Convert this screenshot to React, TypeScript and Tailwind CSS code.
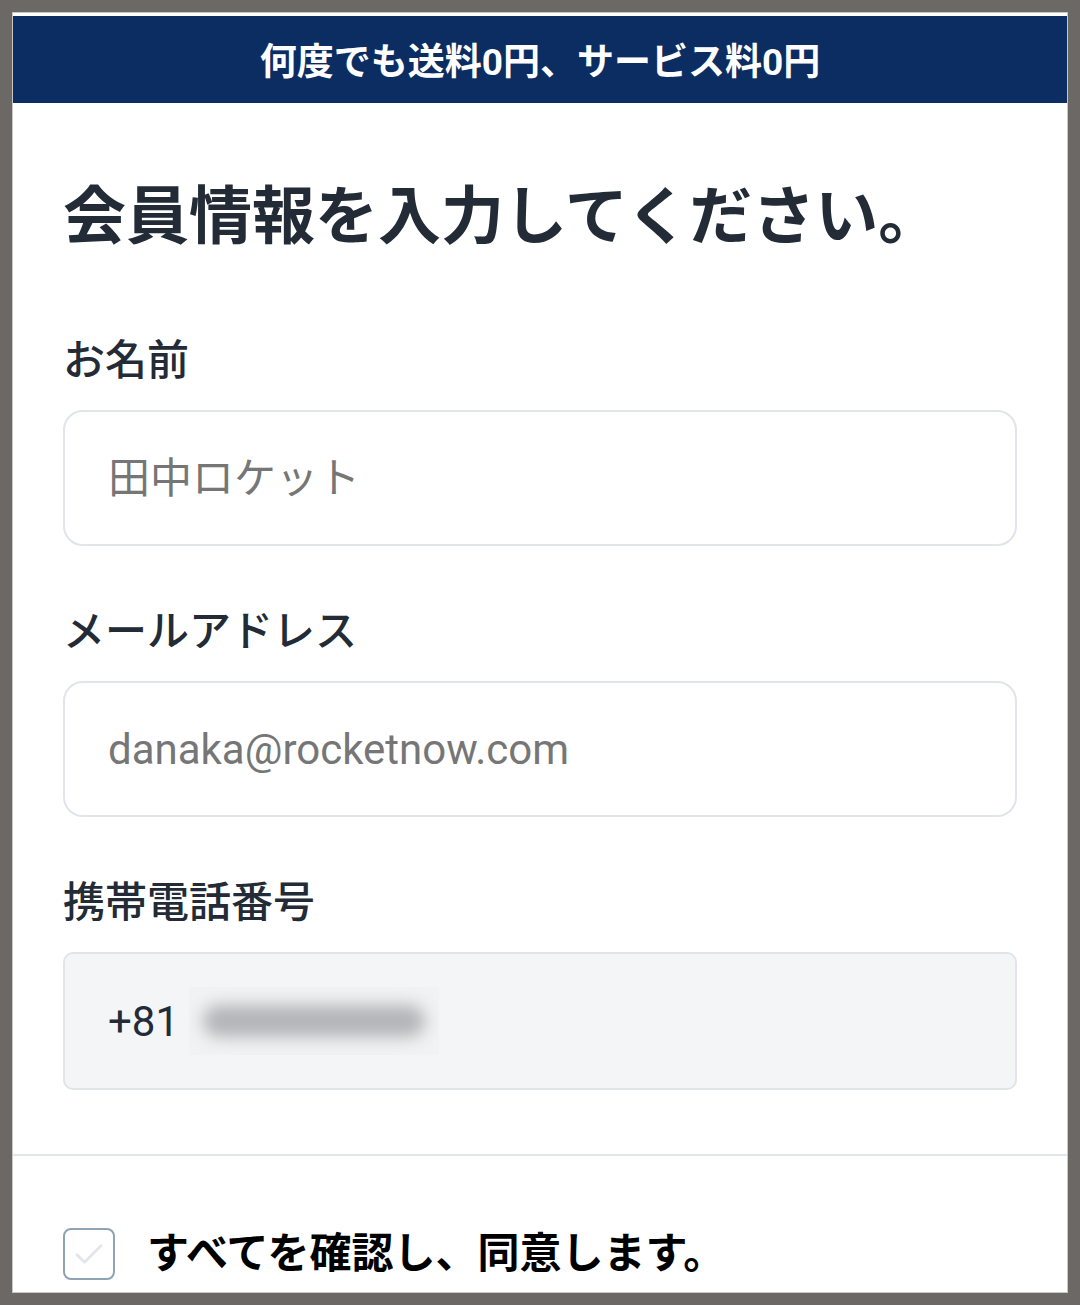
import React from 'react';

const font = { fontFamily: 'Roboto, "Noto Sans CJK JP", sans-serif' };

const Label: React.FC<{ text: string; className?: string }> = ({ text, className = '' }) => (
  <div className={`h-[48px] text-[42px] leading-[48px] font-medium text-[#222b36] ${className}`}>{text}</div>
);

const App: React.FC = () => {
  return (
    <div className="w-[1080px] h-[1305px] bg-[#6b6866] pt-[12px] pl-[12px]" style={font}>
      <div className="w-[1056px] h-[1281px] bg-white border border-[#c9c7c5] overflow-hidden pt-[3px]">
        <div className="h-[87px] bg-[#0c2d62] flex items-center justify-center text-white font-bold text-[37px] leading-none pt-[5px]">
          何度でも送料0円、サービス料0円
        </div>

        <div className="px-[50px]">
          <h1 className="mt-[78px] text-[63px] leading-[72px] font-bold text-[#222b36]">会員情報を入力してください。</h1>

          <Label text="お名前" className="mt-[84px]" />
          <div className="mt-[25px] h-[136px] rounded-[20px] border-2 border-[#e1e4e9] flex items-center px-[43px] text-[42px] text-[#767676]">
            田中ロケット
          </div>

          <Label text="メールアドレス" className="mt-[62px]" />
          <div className="mt-[25px] h-[136px] rounded-[20px] border-2 border-[#e1e4e9] flex items-center px-[43px] text-[42px] text-[#767676]">
            danaka@rocketnow.com
          </div>

          <Label text="携帯電話番号" className="mt-[62px]" />
          <div className="mt-[25px] h-[138px] rounded-[10px] border-2 border-[#e1e4e9] bg-[#f4f5f7] flex items-center px-[43px] text-[42px] text-[#222b36]">
            <span>+81</span>
            <span className="ml-[10px] w-[250px] h-[68px] bg-[#f1f2f4] flex items-center justify-center overflow-hidden">
              <span className="block w-[222px] h-[32px] rounded-full bg-[#b3b5b8] blur-[8px]" />
            </span>
          </div>
        </div>

        <div className="mt-[64px] h-[2px] bg-[#e2e5ea]" />

        <div className="px-[50px] mt-[72px] flex items-center gap-[32px]">
          <div className="w-[52px] h-[52px] rounded-[8px] border-2 border-[#8fa2b6] flex items-center justify-center">
            <svg width="36" height="36" viewBox="0 0 24 24" fill="none" stroke="#e2e5ea" strokeWidth="1.8" strokeLinecap="round" strokeLinejoin="round">
              <path d="M4 12.5l5 5L20 6.5" />
            </svg>
          </div>
          <span className="text-[42px] leading-[48px] font-bold text-black">すべてを確認し、同意します。</span>
        </div>
      </div>
    </div>
  );
};

export default App;
